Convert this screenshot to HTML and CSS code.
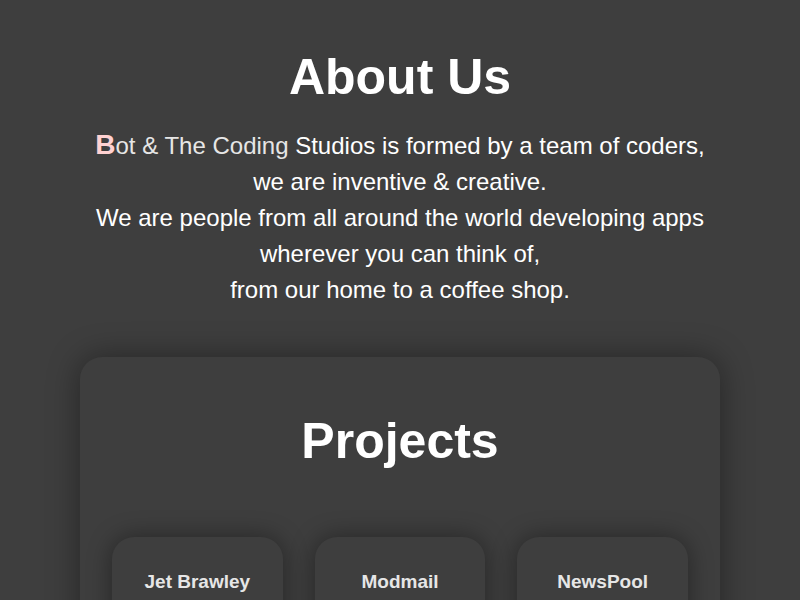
FILE: index.html
```html
<!DOCTYPE html>
<html lang="en">
<head>
<meta charset="utf-8">
<title>About Us</title>
<link rel="stylesheet" href="styles.css">
</head>
<body>
<section class="about">
  <h1 class="title">About Us</h1>
  <p class="intro"><span class="initial">B</span><span class="brand">ot &amp; The Coding</span> Studios is formed by a team of coders,<br>we are inventive &amp; creative.<br>We are people from all around the world developing apps<br>wherever you can think of,<br>from our home to a coffee shop.</p>
</section>
<section class="projects">
  <h2 class="title">Projects</h2>
  <div class="grid">
    <div class="project"><h3 class="project-name">Jet Brawley</h3></div>
    <div class="project"><h3 class="project-name">Modmail</h3></div>
    <div class="project"><h3 class="project-name">NewsPool</h3></div>
  </div>
</section>
</body>
</html>
```
FILE: styles.css
```css
html, body {
  margin: 0;
  padding: 0;
}
body {
  background: #3e3e3e;
  color: #ffffff;
  font-family: "Liberation Sans", Arial, sans-serif;
  overflow: hidden;
  height: 600px;
}
.about {
  padding-top: 49px;
  text-align: center;
}
.title {
  margin: 0;
  font-size: 50px;
  line-height: 56px;
  font-weight: bold;
  color: #ffffff;
}
.intro {
  margin: 22px 0 0;
  font-size: 24px;
  line-height: 36px;
}
.initial {
  color: #ffd1d1;
  font-weight: bold;
  font-size: 28px;
}
.brand {
  color: #e6e6e6;
}
.projects {
  width: 640px;
  box-sizing: border-box;
  margin: 49px auto 0;
  padding: 56px 32px 40px;
  background: #3e3e3e;
  border-radius: 22px;
  box-shadow: 0 0 32px rgba(0, 0, 0, 0.4);
  text-align: center;
}
.grid {
  margin-top: 68px;
  display: grid;
  grid-template-columns: repeat(3, 1fr);
  gap: 32px;
}
.project {
  height: 180px;
  border-radius: 22px;
  background: #3e3e3e;
  box-shadow: 0 0 24px rgba(0, 0, 0, 0.4);
  padding-top: 34px;
  box-sizing: border-box;
}
.project-name {
  margin: 0;
  font-size: 19px;
  line-height: 22px;
  font-weight: bold;
  color: #e6e6e6;
}
```
